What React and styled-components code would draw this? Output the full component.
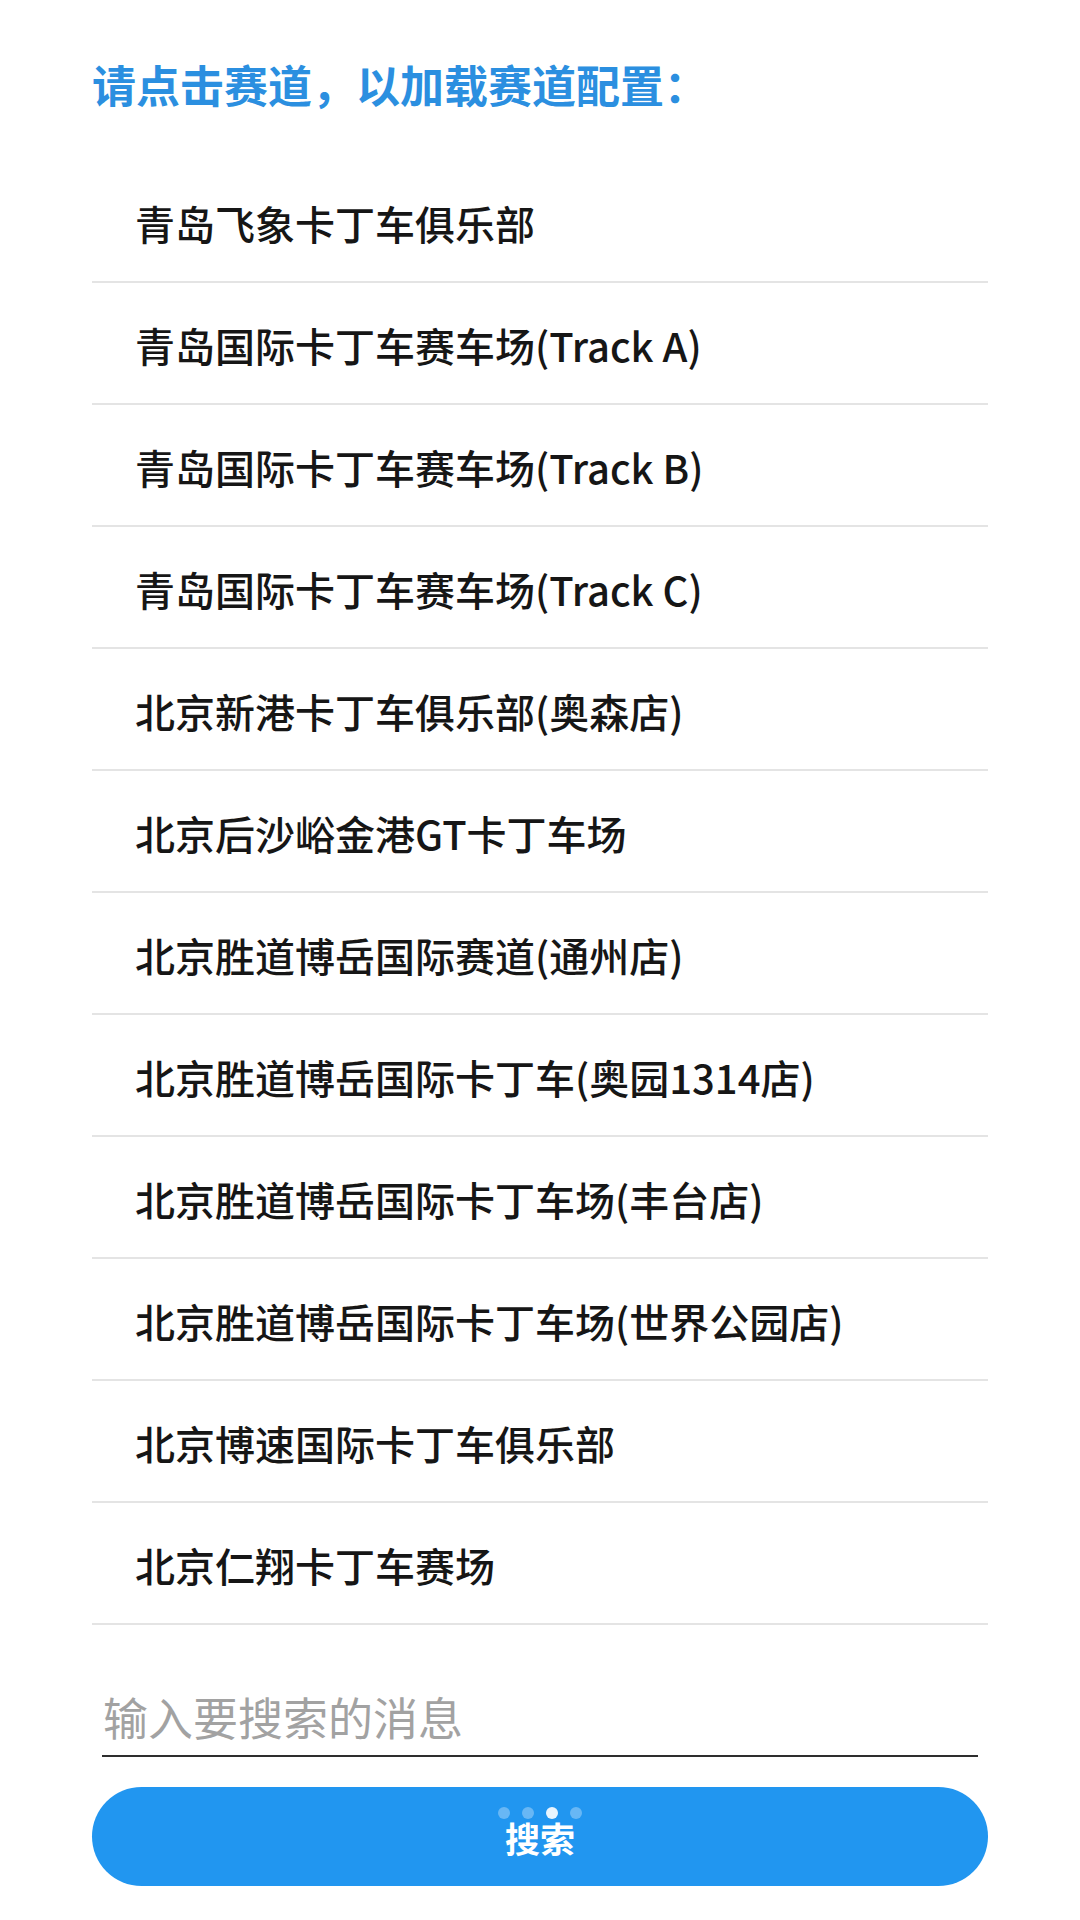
import React from "react";
import styled, { createGlobalStyle } from "styled-components";

const GlobalStyle = createGlobalStyle`
  html, body {
    margin: 0;
    padding: 0;
    background: #ffffff;
  }
  body {
    font-family: "Noto Sans CJK SC", "Noto Sans", sans-serif;
  }
  * { box-sizing: border-box; }
`;

const Page = styled.div`
  width: 1080px;
  min-height: 1920px;
  padding: 62px 92px 0 92px;
  display: flex;
  flex-direction: column;
  background: #ffffff;
`;

const Title = styled.h1`
  margin: 0;
  font-size: 44px;
  line-height: 44px;
  font-weight: 700;
  color: #2b8fe0;
  letter-spacing: 0;
`;

const List = styled.ul`
  list-style: none;
  margin: 55px 0 0;
  padding: 0;
  display: flex;
  flex-direction: column;
`;

const Row = styled.li`
  height: 122px;
  display: flex;
  align-items: center;
  padding-left: 43px;
  padding-top: 4px;
  border-bottom: 2px solid #e4e4e4;
  font-size: 40px;
  font-weight: 500;
  color: #161616;
  cursor: pointer;
`;

const Field = styled.input`
  display: block;
  margin: 69px 10px 0;
  padding: 0 0 16px 1px;
  height: 63px;
  border: none;
  border-bottom: 2px solid #2e2e2e;
  outline: none;
  background: transparent;
  font-family: "Noto Sans CJK SC", "Noto Sans", sans-serif;
  font-size: 45px;
  line-height: 45px;
  color: #222;
  &::placeholder {
    color: #a2a2a2;
  }
`;

const Button = styled.button`
  position: relative;
  margin-top: 30px;
  height: 99px;
  width: 100%;
  border: none;
  border-radius: 50px;
  background: #2196f0;
  color: #ffffff;
  font-family: "Noto Sans CJK SC", "Noto Sans", sans-serif;
  font-size: 35px;
  font-weight: 700;
  line-height: 1;
  display: flex;
  align-items: center;
  justify-content: center;
  padding-top: 2px;
  cursor: pointer;
`;

const Dots = styled.div`
  position: absolute;
  top: 20px;
  left: 50%;
  transform: translateX(-50%);
  display: flex;
  gap: 12px;
`;

const Dot = styled.span`
  width: 12px;
  height: 12px;
  border-radius: 50%;
  background: ${(p) => (p.$active ? "rgba(255,255,255,0.9)" : "rgba(255,255,255,0.32)")};
`;

const tracks = [
  "青岛飞象卡丁车俱乐部",
  "青岛国际卡丁车赛车场(Track A)",
  "青岛国际卡丁车赛车场(Track B)",
  "青岛国际卡丁车赛车场(Track C)",
  "北京新港卡丁车俱乐部(奥森店)",
  "北京后沙峪金港GT卡丁车场",
  "北京胜道博岳国际赛道(通州店)",
  "北京胜道博岳国际卡丁车(奥园1314店)",
  "北京胜道博岳国际卡丁车场(丰台店)",
  "北京胜道博岳国际卡丁车场(世界公园店)",
  "北京博速国际卡丁车俱乐部",
  "北京仁翔卡丁车赛场",
];

export default function App() {
  return (
    <>
      <GlobalStyle />
      <Page>
        <Title>请点击赛道，以加载赛道配置：</Title>
        <List>
          {tracks.map((t) => (
            <Row key={t}>{t}</Row>
          ))}
        </List>
        <Field placeholder="输入要搜索的消息" />
        <Button>
          <Dots>
            <Dot />
            <Dot />
            <Dot $active />
            <Dot />
          </Dots>
          搜索
        </Button>
      </Page>
    </>
  );
}
